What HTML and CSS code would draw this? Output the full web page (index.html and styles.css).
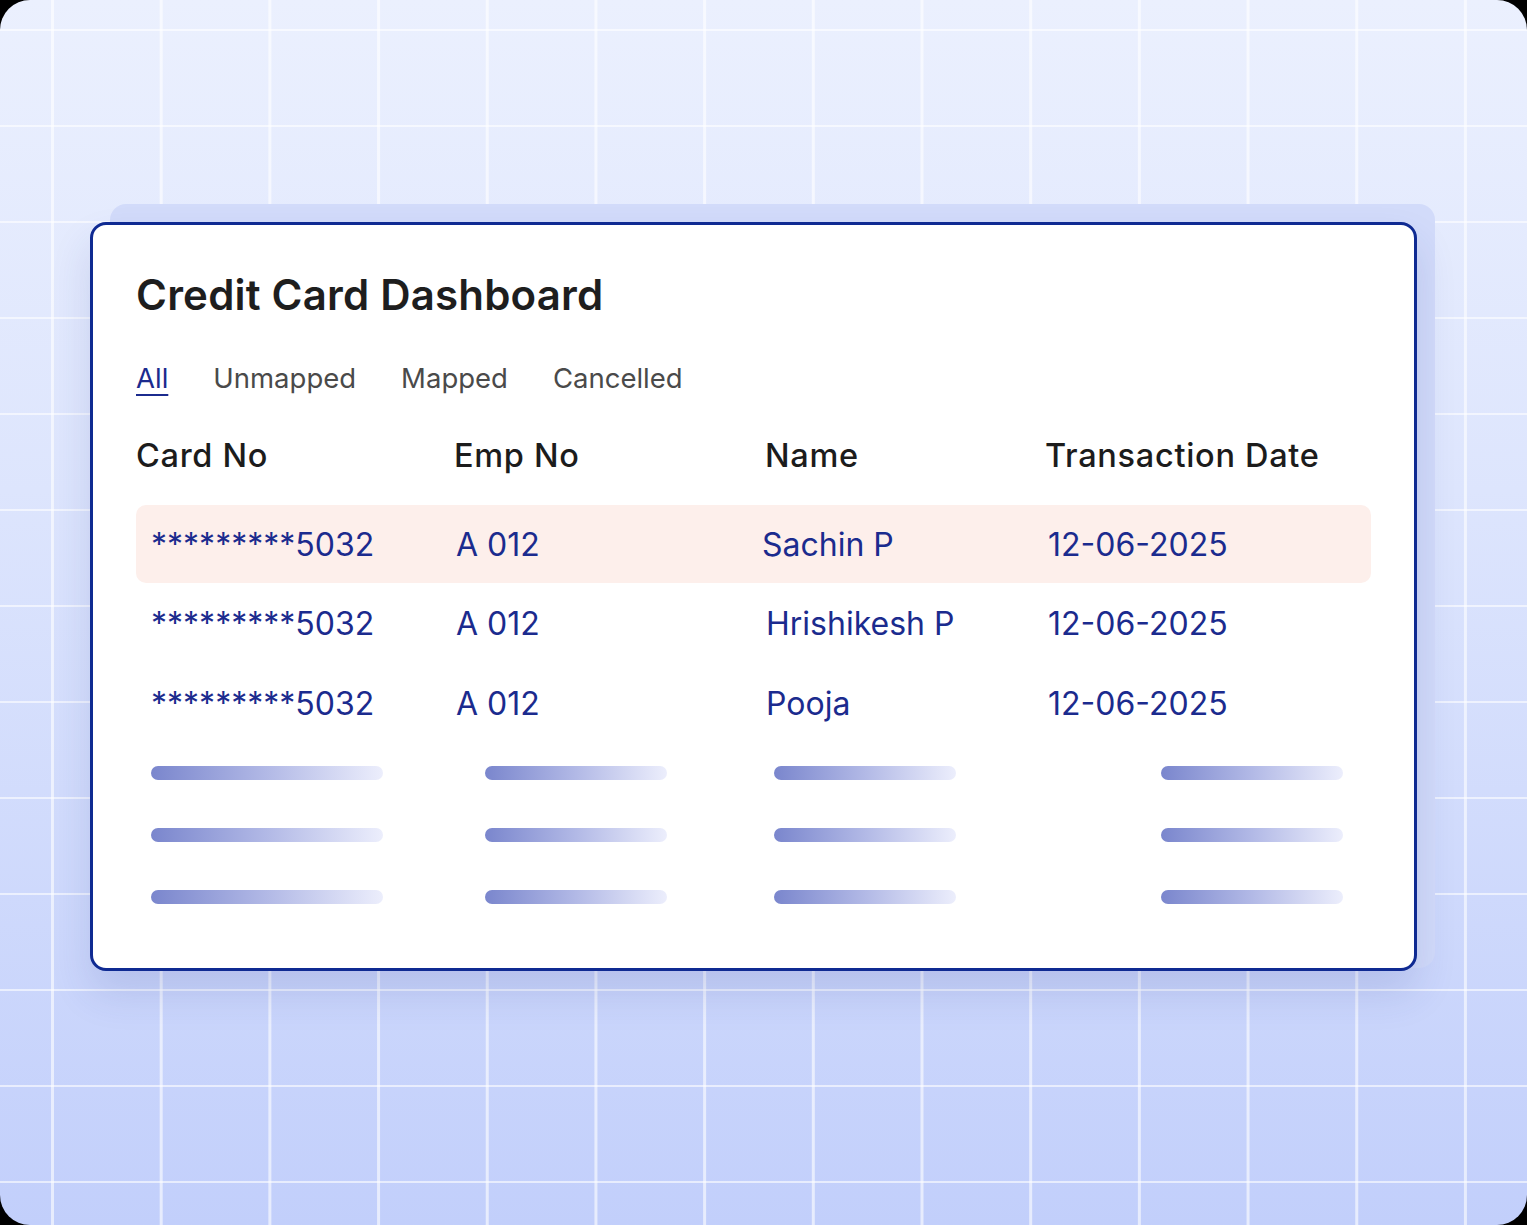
FILE: index.html
```html
<!DOCTYPE html>
<html lang="en">
<head>
<meta charset="utf-8">
<title>Credit Card Dashboard</title>
<link rel="stylesheet" href="styles.css">
</head>
<body>
<div class="frame">
  <section class="card">
    <h1 class="title">Credit Card Dashboard</h1>
    <nav class="tabs">
      <span class="tab active">All</span>
      <span class="tab">Unmapped</span>
      <span class="tab">Mapped</span>
      <span class="tab">Cancelled</span>
    </nav>
    <div class="head">
      <span class="hc">Card No</span>
      <span class="hc">Emp No</span>
      <span class="hc">Name</span>
      <span class="hc">Transaction Date</span>
    </div>
    <div class="row highlight">
      <span class="c1">*********5032</span>
      <span class="c2">A 012</span>
      <span class="c3">Sachin P</span>
      <span class="c4">12-06-2025</span>
    </div>
    <div class="row plain">
      <span class="c1">*********5032</span>
      <span class="c2">A 012</span>
      <span class="c3">Hrishikesh P</span>
      <span class="c4">12-06-2025</span>
    </div>
    <div class="row plain">
      <span class="c1">*********5032</span>
      <span class="c2">A 012</span>
      <span class="c3">Pooja</span>
      <span class="c4">12-06-2025</span>
    </div>
    <div class="skeletons">
      <div class="sk-row"><i class="bar wide"></i><i class="bar b2"></i><i class="bar b3"></i><i class="bar b4"></i></div>
      <div class="sk-row"><i class="bar wide"></i><i class="bar b2"></i><i class="bar b3"></i><i class="bar b4"></i></div>
      <div class="sk-row"><i class="bar wide"></i><i class="bar b2"></i><i class="bar b3"></i><i class="bar b4"></i></div>
    </div>
  </section>
</div>
</body>
</html>
```

FILE: styles.css
```css
* { box-sizing: border-box; }
html, body { margin: 0; padding: 0; background: #000; }
body { width: 1527px; height: 1225px; overflow: hidden; font-family: Inter, "Noto Sans", sans-serif; }

.frame {
  position: relative;
  z-index: 0;
  width: 1527px;
  height: 1225px;
  border-radius: 30px;
  background-color: #d6e0fc;
  background-image:
    linear-gradient(to right, rgba(255,255,255,0.6) 0, rgba(255,255,255,0.6) 2.5px, transparent 2.5px),
    linear-gradient(to bottom, rgba(255,255,255,0.6) 0, rgba(255,255,255,0.6) 2.5px, transparent 2.5px),
    linear-gradient(to bottom, #ebf0fe 0%, #dde5fd 40%, #c2cffb 100%);
  background-size: 108.7px 100%, 100% 96px, 100% 100%;
  background-position: 51px 0, 0 29px, 0 0;
  padding: 222px 110px 0 90px;
}

.card {
  position: relative;
  width: 1327px;
  height: 749px;
  background: #fff;
  border: 3px solid #0f2a92;
  border-radius: 16px;
  box-shadow: 0 22px 40px rgba(40, 60, 140, 0.14);
  padding: 45px 43px 0 43px;
}
.card::before {
  content: "";
  position: absolute;
  left: 17px;
  top: -21px;
  right: -21px;
  bottom: 0;
  background: #d2dbfa;
  border-radius: 16px;
  z-index: -1;
}

.title {
  margin: 0;
  font-size: 42px;
  line-height: 50px;
  font-weight: 600;
  color: #1e1e1e;
  letter-spacing: 0.2px;
}

.tabs {
  display: flex;
  gap: 45px;
  margin-top: 42px;
  font-size: 27.5px;
  line-height: 32px;
  color: #4a4a4a;
}
.tab.active {
  color: #1b2b8e;
  text-decoration: underline;
  text-decoration-thickness: 2px;
  text-underline-offset: 6px;
}

.head {
  display: grid;
  grid-template-columns: 318px 311px 280px 1fr;
  margin-top: 43px;
  font-size: 32.5px;
  line-height: 38px;
  font-weight: 500;
  color: #1c1c1c;
  letter-spacing: 0.7px;
}

.row {
  display: grid;
  grid-template-columns: 305px 306px 286px 1fr;
  align-items: center;
  height: 78px;
  padding-left: 15px;
  font-size: 32px;
  color: #1b2b8e;
  border-radius: 10px;
}
.row.highlight { margin-top: 30px; background: #fdefeb; }
.row.plain { height: 80px; }
.row.plain .c3 { padding-left: 4px; }

.skeletons {
  margin-top: 23px;
  display: flex;
  flex-direction: column;
  gap: 48px;
}
.sk-row {
  display: flex;
  padding-left: 15px;
  height: 14px;
}
.bar {
  display: block;
  height: 14px;
  border-radius: 7px;
  background: linear-gradient(to right, #7a86cd 0%, #b2b9e6 50%, #eceefc 100%);
}
.bar.wide { width: 232px; }
.bar.b2 { width: 182px; margin-left: 102px; }
.bar.b3 { width: 182px; margin-left: 107px; }
.bar.b4 { width: 182px; margin-left: 205px; }
```
